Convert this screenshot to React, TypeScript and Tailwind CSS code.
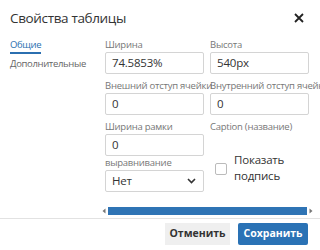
import React from "react";

const font = { fontFamily: '"Open Sans", "Noto Sans", sans-serif' };

function Field({ label, value, select }: { label: string; value: string; select?: boolean }) {
  return (
    <div className="flex flex-col">
      <div className="h-[13px] text-[9.5px] leading-[13px] text-[#777] whitespace-nowrap tracking-[-0.25px]">{label}</div>
      <div className="mt-[1px] h-[22px] border border-[#d4d4d4] rounded-[2px] flex items-center pl-[6px] pr-[7px] text-[11.5px] tracking-[-0.2px] text-[#333] bg-white">
        <span className="flex-1">{value}</span>
        {select && (
          <svg width="9" height="6" viewBox="0 0 9 6">
            <path d="M1 1l3.5 3.5L8 1" stroke="#333" strokeWidth="1.6" fill="none" />
          </svg>
        )}
      </div>
    </div>
  );
}

export default function App() {
  return (
    <div className="w-[320px] h-[250px] bg-white overflow-hidden relative" style={font}>
      <div className="flex items-center justify-between pl-[10px] pr-[16px] pt-[6px] h-[30px]">
        <div className="text-[13.5px] tracking-[-0.35px] text-[#333]">Свойства таблицы</div>
        <svg width="10" height="10" viewBox="0 0 10 10">
          <path d="M1 1l8 8M9 1l-8 8" stroke="#222" strokeWidth="1.8" />
        </svg>
      </div>
      <div className="flex pt-[8px]">
        <div className="w-[95px] pl-[10px] flex flex-col text-[9.5px] tracking-[-0.35px]">
          <div className="self-start text-[#2b6fb0] leading-[13px] pb-[1px] border-b-[2px] border-[#2b6fb0]">Общие</div>
          <div className="text-[#666] mt-[3px] leading-[13px]">Дополнительные</div>
        </div>
        <div className="grid grid-cols-[99px_99px] gap-x-[6px] gap-y-[5px] ml-[10px]">
          <Field label="Ширина" value="74.5853%" />
          <Field label="Высота" value="540px" />
          <Field label="Внешний отступ ячейки" value="0" />
          <Field label="Внутренний отступ ячейки" value="0" />
          <Field label="Ширина рамки" value="0" />
          <div className="flex flex-col h-[36px] overflow-visible">
            <div className="h-[13px] text-[9.5px] leading-[13px] text-[#777] whitespace-nowrap tracking-[-0.25px]">Caption (название)</div>
            <div className="flex items-start mt-[19px] ml-[5px]">
              <div className="w-[12px] h-[12px] border border-[#bbb] rounded-[2px] mt-[11px] shrink-0"></div>
              <div className="ml-[7px] text-[11.5px] tracking-[-0.2px] leading-[16px] text-[#333]">Показать<br />подпись</div>
            </div>
          </div>
          <div className="-mt-[5px]">
            <Field label="выравнивание" value="Нет" select />
          </div>
        </div>
      </div>
      <div className="flex items-center ml-[100px] mr-[5px] mt-[14px] h-[9px]">
        <svg width="8" height="8" viewBox="0 0 8 8"><path d="M5.5 1.5L2.5 4L5.5 6.5z" fill="#777" /></svg>
        <div className="flex-1 h-[8px] bg-[#2f74b5]"></div>
        <svg width="8" height="8" viewBox="0 0 8 8"><path d="M2.5 1.5L5.5 4L2.5 6.5z" fill="#777" /></svg>
      </div>
      <div className="absolute left-0 right-0 top-[218px] border-t border-[#e2e2e2]"></div>
      <div className="absolute right-[12px] top-[223px] flex gap-[8px]">
        <div className="w-[65px] h-[22px] bg-[#efefef] text-[#333] text-[10.5px] font-bold flex items-center justify-center">Отменить</div>
        <div className="w-[70px] h-[22px] bg-[#2a72b5] text-white text-[10.5px] font-bold flex items-center justify-center rounded-[2px]">Сохранить</div>
      </div>
    </div>
  );
}
